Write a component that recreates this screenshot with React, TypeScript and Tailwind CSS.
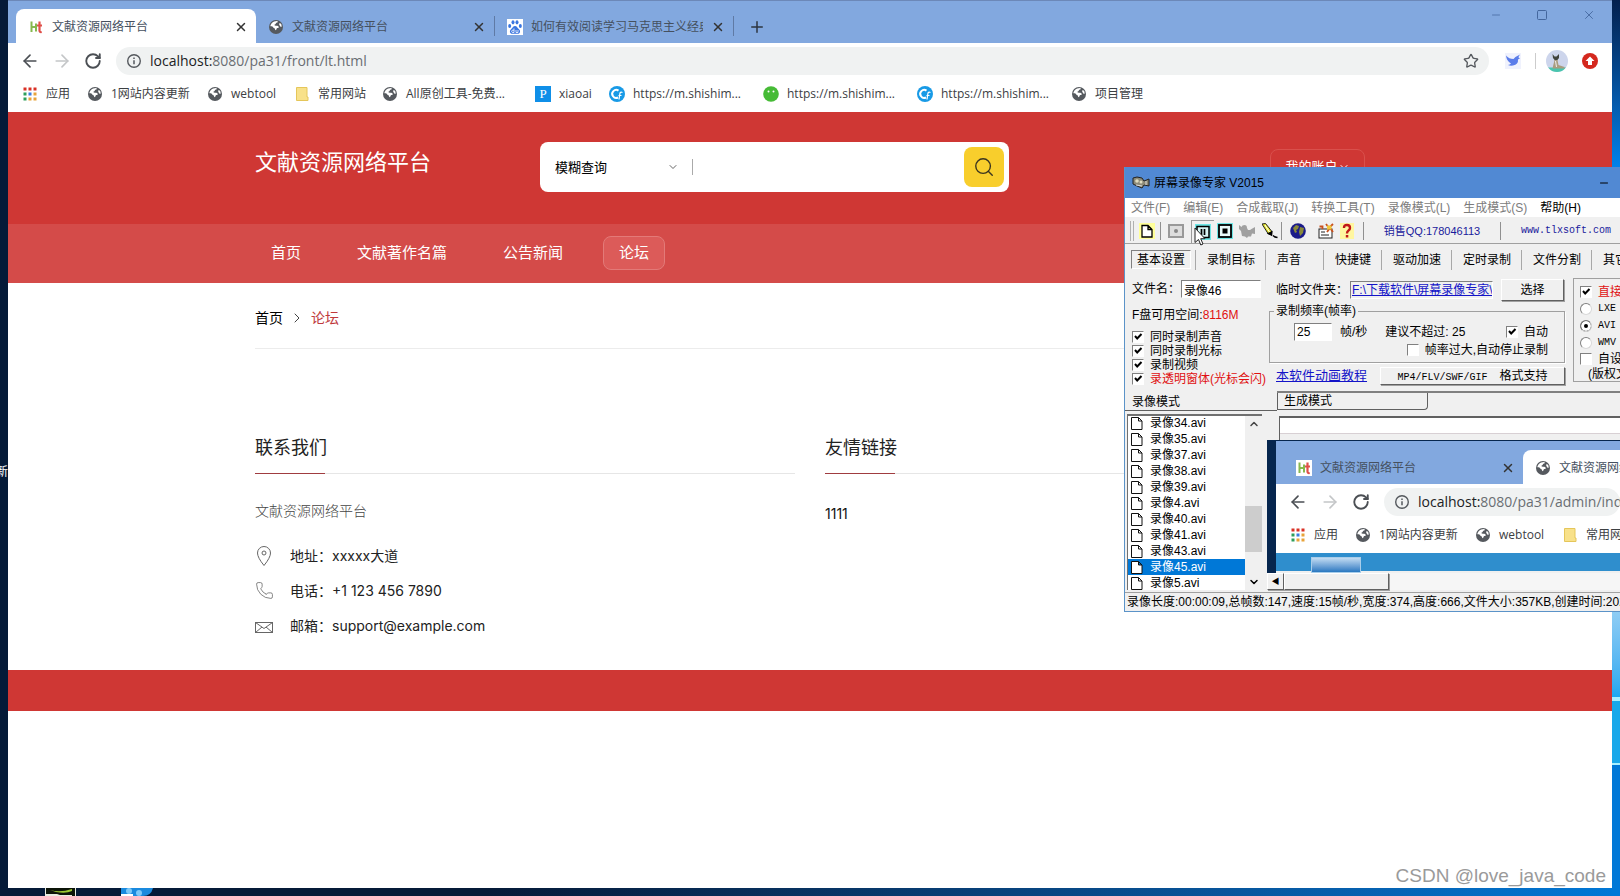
import React from "react";
import { ArrowLeft, ArrowRight, ChevronDown, ChevronRight, ChevronUp, Minus, Phone, Plus, RotateCw, Search, Square, Star, X } from "lucide-react";

const UI_FONT = "[font-family:'Open_Sans','Noto_Sans_CJK_SC',sans-serif]";
const SITE_FONT = "[font-family:Inter,'Noto_Sans_CJK_SC',sans-serif]";
const WIN_FONT = "[font-family:'Liberation_Sans','Noto_Sans_CJK_SC',sans-serif]";

/* ---------- small icons ---------- */

function GlobeIcon() {
    return (
        <svg viewBox="0 0 16 16" className="w-4 h-4 shrink-0">
            <circle cx="8" cy="8" r="7" fill="#55595e" />
            <path d="M9 1.9c1 .3 1 1.2.2 1.6-.8.3-1.400.3-1.400 1.100 0 .7-.8.6-1.200 1.200-.3.6.3 1 1.400.9 1.400-.1 2.600.3 2.800 1.200.1.700-.600.900-1.500 1-.8.2-.6 1.200-1.100 1.900-.5.8-1.200.2-1.200-.7 0-1-1.200-.9-1.700-1.700C4.900 7.600 3.800 7 2.400 7.200c.3-2.600 2.400-5.200 6.600-5.300z" fill="#fff" />
            <path d="M11.400 4.200c.8-.2 1.500.2 1.900 1.100.3.900.4 1.600.2 2.700-.9 0-1.600-.5-1.800-1.400-.2-.9-1-1.500-.3-2.400z" fill="#fff" />
        </svg>
    );
}

function HtIcon() {
    return (
        <svg viewBox="0 0 16 16" className="w-4 h-4 shrink-0">
            <rect width="16" height="16" fill="#fff" />
            <path d="M3.500 2.500v10.500M3.500 8h4.500M8 4.500v8" stroke="#86b84e" strokeWidth="2" fill="none" />
            <path d="M11.500 2.500v9q0 2 2.200 1.500M9 6.500h5" stroke="#e0504a" strokeWidth="2.200" fill="none" />
        </svg>
    );
}

function PawIcon() {
    return (
        <svg viewBox="0 0 16 16" className="w-4 h-4 shrink-0">
            <rect width="16" height="16" fill="#fff" />
            <g fill="#3a76e0">
                <ellipse cx="2.700" cy="7" rx="1.500" ry="2" />
                <ellipse cx="6" cy="3.300" rx="1.500" ry="2.100" />
                <ellipse cx="10" cy="3.300" rx="1.500" ry="2.100" />
                <ellipse cx="13.300" cy="7" rx="1.500" ry="2" />
                <path d="M8 7c2 0 2.500 2 4 3.200 2 1.800 1 4.600-1.300 4.600H5.300C3 14.800 2 12 4 10.200 5.500 9 6 7 8 7z" />
            </g>
            <path d="M7 9.500v4H5.800a1 1 0 010-2.300H7M9 11v2.500h2V11" stroke="#fff" strokeWidth=".8" fill="none" />
        </svg>
    );
}

function AppsIcon() {
    const colors = ["#d93025", "#d93025", "#d93025", "#2e9e5b", "#3b7de0", "#e8a33a", "#2e9e5b", "#e8a33a", "#e8a33a"];
    return (
        <svg viewBox="0 0 16 16" className="w-4 h-4 shrink-0">
            {colors.map((c, i) => (
                <rect key={i} x={1.5 + (i % 3) * 5} y={1.5 + Math.floor(i / 3) * 5} width="3" height="3" fill={c} />
            ))}
        </svg>
    );
}

function FolderIcon() {
    return (
        <svg viewBox="0 0 16 16" className="w-4 h-4 shrink-0">
            <path d="M2.500 1.500h10.500v9.500h1v3.500H2.500z" fill="#f8e18a" stroke="#e5c65a" />
        </svg>
    );
}

function PIcon() {
    return <span className="w-4 h-4 shrink-0 bg-[#0f8fe8] text-white text-[13px] leading-4 text-center [font-family:'Liberation_Serif',serif]">P</span>;
}

function CIcon() {
    return (
        <svg viewBox="0 0 16 16" className="w-4 h-4 shrink-0">
            <circle cx="8" cy="8" r="8" fill="#189ae6" />
            <path d="M9.500 4.600A4 4 0 109 11.500" stroke="#fff" strokeWidth="2" fill="none" />
            <path d="M13.500 6.500q-2.500-1-2.700 1.500L10 13.500M9.500 9.500h3" stroke="#fff" strokeWidth="1.200" fill="none" />
        </svg>
    );
}

function WechatIcon() {
    return (
        <svg viewBox="0 0 16 16" className="w-4 h-4 shrink-0">
            <circle cx="8" cy="8" r="7.800" fill="#46bb36" />
            <circle cx="5.500" cy="5.500" r="1" fill="#fff" />
            <circle cx="10.500" cy="5.500" r="1" fill="#fff" />
        </svg>
    );
}

function InfoIcon() {
    return (
        <svg viewBox="0 0 16 16" className="w-4 h-4 shrink-0" stroke="#55595e" fill="none">
            <circle cx="8" cy="8" r="6.300" strokeWidth="1.400" />
            <path d="M8 7.200v4M8 4.500v1.500" strokeWidth="1.500" />
        </svg>
    );
}

function FileIcon() {
    return (
        <svg viewBox="0 0 14 16" className="w-3.5 h-4 shrink-0">
            <path d="M1.500 2.500h7l3.500 3.500v8.500H1.500zM8.500 2.500v3.500h3.500" fill="#fff" stroke="#111" />
        </svg>
    );
}

function BirdIcon() {
    return (
        <svg viewBox="0 0 16 16" className="w-4 h-4 shrink-0 bg-[#f0f2fd]">
            <path d="M1 2.500q3 3.500 7.500 3.500Q10.500 3.500 15 1.500q-1.500 2-1.500 3l1.500.8-2 1.200q.5 5-5 6-3 .5-5-.5 2-.5 3-1.500Q1.500 8 1 2.500z" fill="#5b7dea" />
        </svg>
    );
}

function AvatarIcon() {
    return (
        <svg viewBox="0 0 22 22" className="w-[22px] h-[22px] shrink-0">
            <clipPath id="avatar"><circle cx="11" cy="11" r="11" /></clipPath>
            <g clipPath="url(#avatar)">
                <rect width="22" height="22" fill="#cdd5ec" />
                <rect y="17.500" width="22" height="5" fill="#49c5ae" />
                <path d="M6.500 4l2 2.500h2L13 4v4l-2 2.500H9L7 8z" fill="#40443e" />
                <path d="M8.500 10h3l1 5 6 2v1.500H6.500z" fill="#a99c80" />
                <path d="M9.500 11l1 6" stroke="#eee" />
            </g>
        </svg>
    );
}

function UpdateIcon() {
    return (
        <svg viewBox="0 0 16 16" className="w-4 h-4 shrink-0">
            <circle cx="8" cy="8" r="8" fill="#d4281e" />
            <path d="M8 3.500l4.500 4.500H10v4H6V8H3.500z" fill="#fff" />
        </svg>
    );
}

function PinIcon() {
    return (
        <svg viewBox="0 0 19 20" className="w-[19px] h-5" fill="none" stroke="#666">
            <path d="M9 19.500Q2.500 11.500 2.500 7a6.500 6.500 0 0113 0Q15.500 11.500 9 19.500z" />
            <circle cx="9" cy="7" r="2" />
        </svg>
    );
}

function PhoneIcon() {
    return <Phone className="w-[19px] h-[19px] text-[#666]" strokeWidth={1} />;
}

function MailIcon() {
    return (
        <svg viewBox="0 0 19 20" className="w-[19px] h-5" fill="none" stroke="#666">
            <rect x=".5" y="6.500" width="17" height="10" />
            <path d="M.5 6.500l8.500 6 8.500-6M.5 16.500l6.500-5.500M17.500 16.500L11 11" />
        </svg>
    );
}

/* ---------- browser chrome ---------- */

function Tab({ icon, title, active, width }: { icon: React.ReactNode; title: string; active?: boolean; width: string }) {
    return (
        <div className={`${width} ${active ? "bg-white rounded-t-lg" : ""} h-[34px] shrink-0 flex items-center pt-0.5 pl-3 pr-2`}>
            {icon}
            <span className="ml-2 flex-1 min-w-0 overflow-hidden whitespace-nowrap text-xs text-[#45505e]">{title}</span>
            <button aria-label="关闭标签页" className="ml-2 shrink-0">
                <X className="w-3.5 h-3.5 text-[#333]" strokeWidth={2.5} />
            </button>
        </div>
    );
}

function AddressBar({ path, children }: { path: string; children?: React.ReactNode }) {
    return (
        <div className="h-9 flex items-center pl-3 bg-white">
            <button aria-label="后退" className="w-8 shrink-0"><ArrowLeft className="w-5 h-5 text-[#4b4f54]" /></button>
            <button aria-label="前进" className="w-8 shrink-0"><ArrowRight className="w-5 h-5 text-[#c4c6c8]" /></button>
            <button aria-label="刷新" className="w-8 shrink-0"><RotateCw className="w-[18px] h-[18px] text-[#4b4f54]" strokeWidth={2.5} /></button>
            <div className="h-7 flex-1 flex items-center rounded-full bg-[#f0f2f2] px-2.5 overflow-hidden">
                <InfoIcon />
                <span className="ml-2 flex-1 whitespace-nowrap text-sm text-[#6a6e73]">
                    <span className="text-[#202124]">localhost:</span>{path}
                </span>
                {children && <Star className="w-4 h-4 text-[#55595e]" />}
            </div>
            {children}
        </div>
    );
}

const bookmarks = [
    { icon: <AppsIcon />, label: "应用", width: "w-[65px]" },
    { icon: <GlobeIcon />, label: "1网站内容更新", width: "w-[120px]" },
    { icon: <GlobeIcon />, label: "webtool", width: "w-[87px]" },
    { icon: <FolderIcon />, label: "常用网站", width: "w-[88px]" },
    { icon: <GlobeIcon />, label: "All原创工具-免费...", width: "w-[153px]" },
    { icon: <PIcon />, label: "xiaoai", width: "w-[74px]" },
    { icon: <CIcon />, label: "https://m.shishim...", width: "w-[154px]" },
    { icon: <WechatIcon />, label: "https://m.shishim...", width: "w-[154px]" },
    { icon: <CIcon />, label: "https://m.shishim...", width: "w-[154px]" },
    { icon: <GlobeIcon />, label: "项目管理", width: "w-[100px]" },
];

function BookmarkBar({ count }: { count?: number }) {
    return (
        <nav className="h-[33px] flex items-center pb-1 pl-3.5 bg-white overflow-hidden">
            {bookmarks.slice(0, count).map((b, i) => (
                <a key={i} href="#" className={`${b.width} shrink-0 flex items-center gap-2 whitespace-nowrap text-xs text-[#3c4043]`}>
                    {b.icon}
                    {b.label}
                </a>
            ))}
        </nav>
    );
}

/* ---------- site ---------- */

const navItems = ["首页", "文献著作名篇", "公告新闻", "论坛"];

function SiteHeader() {
    return (
        <header className="text-white">
            <div className="bg-[#cf3734] h-28">
                <div className="max-w-[1110px] mx-auto pt-[30px] flex items-start">
                    <h1 className="w-[285px] text-[22px] leading-10">文献资源网络平台</h1>
                    <form className="w-[469px] h-[50px] bg-white rounded-lg flex items-center pl-[15px] pr-[5px] text-black">
                        <label className="relative flex items-center">
                            <select aria-label="查询方式" className="appearance-none w-[138px] h-4 border-r border-[#aaa] text-[13px] leading-4 outline-none bg-white">
                                <option>模糊查询</option>
                            </select>
                            <ChevronDown className="absolute right-3.5 w-3 h-3 text-[#666]" />
                        </label>
                        <input aria-label="关键字" className="flex-1 min-w-0 h-10 px-3 outline-none" />
                        <button type="button" aria-label="搜索" className="w-10 h-10 rounded-lg bg-[#f8ce2c] flex items-center justify-center">
                            <Search className="w-[22px] h-[22px] text-[#3b3520]" strokeWidth={1.5} />
                        </button>
                    </form>
                    <button className="ml-auto mt-[7px] w-[95px] h-9 rounded-lg border border-[#d9504c] flex items-center justify-center text-[13px]">
                        我的账户 <ChevronDown className="w-3 h-3" />
                    </button>
                </div>
            </div>
            <div className="bg-[#d44b49] h-[59px]">
                <nav className="max-w-[1110px] h-full mx-auto flex items-center gap-6 pb-0.5">
                    {navItems.map((item) => (
                        <a
                            key={item}
                            href="#"
                            className={`px-[15px] h-[34px] leading-8 text-[15px] rounded-lg border ${item === "论坛" ? "bg-[#dc5b59] border-[#e37a78]" : "border-transparent"}`}
                        >
                            {item}
                        </a>
                    ))}
                </nav>
            </div>
        </header>
    );
}

const contacts = [
    { icon: <PinIcon />, text: "地址：xxxxx大道" },
    { icon: <PhoneIcon />, text: "电话：+1 123 456 7890" },
    { icon: <MailIcon />, text: "邮箱：support@example.com" },
];

function FooterHeading({ children }: { children: React.ReactNode }) {
    return (
        <h2 className="h-[42px] border-b border-[#e6e6e6] text-lg leading-8 text-[#222]">
            <span className="block w-[70px] h-[42px] whitespace-nowrap border-b border-[#a03c40]">{children}</span>
        </h2>
    );
}

function SiteBody() {
    return (
        <main>
            <div className="max-w-[1110px] mx-auto">
                <div className="h-[66px] pt-1 flex items-center gap-1.5 border-b border-[#ececec] text-sm">
                    <a href="#" className="text-black">首页</a>
                    <ChevronRight className="w-4 h-4 text-[#444]" strokeWidth={1.5} />
                    <span className="text-[#c0393c]">论坛</span>
                </div>
                <div className="mt-[83px] h-[238px] grid grid-cols-2 gap-[30px]">
                    <section>
                        <FooterHeading>联系我们</FooterHeading>
                        <p className="mt-[27px] text-sm leading-5 font-light text-[#444]">文献资源网络平台</p>
                        <ul className="mt-[17px] text-sm text-[#222]">
                            {contacts.map(({ icon, text }) => (
                                <li key={text} className="h-[35px] flex items-center gap-4">
                                    {icon}
                                    {text}
                                </li>
                            ))}
                        </ul>
                    </section>
                    <section>
                        <FooterHeading>友情链接</FooterHeading>
                        <a href="#" className="block mt-7 text-sm leading-6 text-[#111]">1111</a>
                    </section>
                </div>
            </div>
            <footer className="bg-[#cf3734] h-[41px]" />
        </main>
    );
}

/* ---------- recorder window ---------- */

const sunken = "border border-t-[#808080] border-l-[#808080] border-r-white border-b-white";
const raised = "border border-t-white border-l-white border-r-[#606060] border-b-[#606060] shadow-[1px_1px_0_#a0a0a0]";

function Check({ label, checked, red }: { label: string; checked?: boolean; red?: boolean }) {
    return (
        <label className={`flex items-center gap-1.5 whitespace-nowrap ${red ? "text-[#e01010]" : ""}`}>
            <span className="relative w-3 h-3 shrink-0">
                <input type="checkbox" defaultChecked={checked} className={`peer block appearance-none w-3 h-3 bg-white ${sunken}`} />
                <svg viewBox="0 0 12 12" className="hidden peer-checked:block absolute inset-0 pointer-events-none">
                    <path d="M3 5l2.200 2.500L9.500 3" stroke="#000" strokeWidth="2" fill="none" />
                </svg>
            </span>
            {label}
        </label>
    );
}

function Radio({ label, checked }: { label: string; checked?: boolean }) {
    return (
        <label className="h-[17px] flex items-center gap-1.5">
            <input type="radio" name="format" defaultChecked={checked} className="appearance-none w-3 h-3 shrink-0 rounded-full bg-white border border-t-[#808080] border-l-[#808080] border-r-[#d8d8d8] border-b-[#d8d8d8] checked:shadow-[inset_0_0_0_3px_#fff] checked:bg-black" />
            <span className="text-[10px] [font-family:'Liberation_Mono',monospace]">{label}</span>
        </label>
    );
}

function ToolButton({ label, width, children }: { label: string; width: string; children: React.ReactNode }) {
    return (
        <button aria-label={label} className={`${width} h-[22px] shrink-0 flex items-center justify-center`}>
            <svg viewBox="0 0 16 16" className="w-4 h-4">{children}</svg>
        </button>
    );
}

function Divider() {
    return <span className="w-px h-[18px] shrink-0 bg-[#909090]" />;
}

function Toolbar() {
    return (
        <div className="h-[27px] shrink-0 flex items-center pt-0.5 pl-[5px] border-b border-[#a0a0a0]">
            <span className="w-1 h-5 shrink-0 border-l border-r border-[#b0b0b0]" />
            <ToolButton label="新建" width="w-[26px]">
                <rect width="16" height="16" fill="#ffff9a" />
                <path d="M3 2.500h6l4 4v7.500H3zM9 2.500v4h4" fill="#fff" stroke="#000" strokeWidth="1.300" />
            </ToolButton>
            <Divider />
            <ToolButton label="录制" width="w-[30px]">
                <rect x="1" y="2" width="14" height="12" fill="#ddd" stroke="#999" strokeWidth="2" />
                <circle cx="8" cy="8" r="2" fill="#888" />
            </ToolButton>
            <span className="relative shrink-0 border-t border-l border-[#9a9a9a]">
                <ToolButton label="暂停" width="w-[22px]">
                    <rect width="16" height="16" fill="#6fe6e6" />
                    <rect x="2" y="2.500" width="12" height="11" fill="#d8f4f4" stroke="#000" strokeWidth="1.500" />
                    <path d="M6.500 5v6M9.500 5v6" stroke="#000" strokeWidth="1.700" />
                </ToolButton>
                <svg viewBox="0 0 12 20" className="absolute left-0.5 top-1.5 z-10 w-3 h-5 pointer-events-none">
                    <path d="M1 1v14.500l3.500-3 2.300 5.500 2.200-1-2.300-5.300H11z" fill="#fff" stroke="#222" />
                </svg>
            </span>
            <ToolButton label="停止" width="w-[21px]">
                <rect width="16" height="16" fill="#6fe6e6" />
                <rect x="2" y="2" width="12" height="12" fill="#e8fafa" stroke="#000" strokeWidth="1.800" />
                <rect x="5.500" y="5.500" width="5" height="5" fill="#000" />
            </ToolButton>
            <ToolButton label="截图" width="w-[23px]">
                <path d="M0 2l2.500 2Q3 2 5.500 2T8 5l1 2h2l1.500-1L16 4v7l-3-.5-1 3H9L8 15 6 13.500 3 13l-1-5L0 6z" fill="#a0a0a0" />
            </ToolButton>
            <ToolButton label="画笔" width="w-[23px]">
                <path d="M0 1l3.500-.5 6 7.500v4l-3.500-1.500z" fill="#e8e82a" stroke="#222" strokeWidth="1" />
                <path d="M3 2l4.500 7" stroke="#fff" />
                <path d="M6.500 10.500l3 1.500.3-3zM11 12.500l2 1.500 2.500.5" fill="#000" stroke="#000" strokeWidth="1.500" />
            </ToolButton>
            <Divider />
            <ToolButton label="主页" width="w-[32px]">
                <circle cx="8" cy="8" r="7.800" fill="#1c1c8a" />
                <path d="M3 5l3-3 3 1-1 3-2 1 1 2-2 1zM10 4l4 1-1 5-3 3-1-4z" fill="#8a8a3a" />
            </ToolButton>
            <ToolButton label="注册" width="w-[23px]">
                <rect x="1" y="6" width="13" height="9" fill="#fff" stroke="#222" />
                <path d="M3 9h4M3 12h8" stroke="#222" />
                <path d="M1.500 3.500h3V6M8 1l3 4 4-4M9 9l3-4 3 4" stroke="#c8501c" strokeWidth="1.800" fill="none" />
                <rect x="9" y="2.500" width="4.500" height="4" fill="#f0c83a" />
            </ToolButton>
            <ToolButton label="帮助" width="w-[20px]">
                <rect x="1" width="14" height="16" fill="#fff6a0" />
                <path d="M5 5q0-3 3-3t3 3q0 1.500-1.500 2.500T8 10.500" stroke="#c01818" strokeWidth="2.400" fill="none" />
                <rect x="6.800" y="12" width="2.500" height="2.500" fill="#c01818" />
            </ToolButton>
            <span className="w-1.5 shrink-0" />
            <Divider />
            <a href="#" className="w-[136px] shrink-0 text-center text-[11px] text-[#1a1a9c]">销售QQ:178046113</a>
            <Divider />
            <a href="#" className="ml-5 text-[10px] text-[#1a1a9c] [font-family:'Liberation_Mono',monospace]">www.tlxsoft.com</a>
        </div>
    );
}

const menus = ["文件(F)", "编辑(E)", "合成截取(J)", "转换工具(T)", "录像模式(L)", "生成模式(S)", "帮助(H)"];

const settingTabs = [
    { label: "录制目标", width: "w-[70px]" },
    { label: "声音", width: "w-[58px]" },
    { label: "快捷键", width: "w-[58px]" },
    { label: "驱动加速", width: "w-[70px]" },
    { label: "定时录制", width: "w-[70px]" },
    { label: "文件分割", width: "w-[70px]" },
    { label: "其它", width: "w-[70px]" },
];

function Settings() {
    return (
        <div className="h-[116px] shrink-0 flex items-start">
            <div className="w-[144px] shrink-0 pl-[7px]">
                <label className="h-6 flex items-center">
                    <span className="w-[49px] shrink-0">文件名：</span>
                    <input defaultValue="录像46" className={`w-20 h-[18px] pl-0.5 bg-white outline-none ${sunken}`} />
                </label>
                <p className="h-[29px] leading-7 whitespace-nowrap">F盘可用空间:<span className="text-[#e01010]">8116M</span></p>
                <div className="flex flex-col leading-[14px]">
                    <Check label="同时录制声音" checked />
                    <Check label="同时录制光标" checked />
                    <Check label="录制视频" checked />
                    <Check label="录透明窗体(光标会闪)" checked red />
                </div>
            </div>
            <div className="w-[296px] shrink-0">
                <div className="h-[26px] flex items-center pl-[7px]">
                    <span className="w-[74px] shrink-0">临时文件夹：</span>
                    <a href="#" className={`w-[143px] h-[18px] leading-4 pl-px shrink-0 overflow-hidden whitespace-nowrap underline text-[#1414c8] ${sunken}`}>F:\下载软件\屏幕录像专家\</a>
                    <button className={`ml-[8px] w-[63px] h-[22px] shrink-0 ${raised}`}>选择</button>
                </div>
                <fieldset className="h-[60px] border border-[#a0a0a0] shadow-[1px_1px_0_#fff] pt-1 pl-6 pr-4">
                    <legend className="-ml-5 px-0.5 leading-4">录制频率(帧率)</legend>
                    <div className="h-[18px] flex items-center">
                        <label className="flex items-center gap-2">
                            <input defaultValue="25" className={`w-[38px] h-[18px] pl-0.5 bg-white outline-none ${sunken}`} />
                            帧/秒
                        </label>
                        <span className="ml-[18px] flex-1">建议不超过: 25</span>
                        <Check label="自动" checked />
                    </div>
                    <div className="h-[18px] flex items-center justify-end">
                        <Check label="帧率过大,自动停止录制" />
                    </div>
                </fieldset>
                <div className="h-[25px] flex items-center justify-between pl-[7px]">
                    <a href="#" className="text-[13px] underline text-[#1414c8]">本软件动画教程</a>
                    <button className={`w-[185px] h-[18px] leading-4 ${raised}`}>
                        <span className="text-[10px] [font-family:'Liberation_Mono',monospace]">MP4/FLV/SWF/GIF</span>
                        <span className="ml-3">格式支持</span>
                    </button>
                </div>
            </div>
            <div className="ml-[8px] mt-px w-[160px] shrink-0 border border-[#a0a0a0] pl-1.5 pt-[5px]">
                <Check label="直接生成" checked red />
                <Radio label="LXE" />
                <Radio label="AVI" checked />
                <Radio label="WMV" />
                <Check label="自设信息" />
                <p className="pl-2 leading-[14px]">(版权文字)</p>
            </div>
        </div>
    );
}

const files = ["录像34.avi", "录像35.avi", "录像37.avi", "录像38.avi", "录像39.avi", "录像4.avi", "录像40.avi", "录像41.avi", "录像43.avi", "录像45.avi", "录像5.avi"];

function Preview() {
    return (
        <div className="flex-1 min-w-0 flex flex-col">
            <div className="h-6 shrink-0 ml-3 mt-0.5 border-t-2 border-l border-[#606060]">
                <div className="h-4 bg-white border-b border-[#d8d0d4]" />
            </div>
            <div className={`flex-1 min-h-0 overflow-hidden flex border-l-[9px] border-t border-[#06264e] ${UI_FONT}`}>
                <div className="flex-1 min-w-0">
                    <div className="h-[43px] bg-[#82a8df] flex items-end pl-2 overflow-hidden">
                        <Tab icon={<HtIcon />} title="文献资源网络平台" width="w-[239px]" />
                        <Tab icon={<GlobeIcon />} title="文献资源网络平台" width="w-[239px]" active />
                    </div>
                    <AddressBar path="8080/pa31/admin/index.html" />
                    <BookmarkBar count={4} />
                    <div className="h-[18px] bg-[#2f8ecd] pl-[35px] pt-1">
                        <div className="w-[50px] h-4 border border-[#a8cdea] bg-linear-to-b from-[#c3dcf2] to-[#2878c0]" />
                    </div>
                </div>
            </div>
            <div className="h-[17px] shrink-0 flex bg-[#f6f6f6]">
                <button aria-label="向左" className={`w-[17px] text-[8px] leading-3 bg-[#f0f0f0] ${raised}`}>◀</button>
                <div className={`w-[105px] bg-[#f0f0f0] ${raised}`} />
            </div>
        </div>
    );
}

function RecorderWindow() {
    return (
        <section className={`absolute top-[167px] left-[1124px] right-0 h-[445px] flex flex-col overflow-hidden bg-[#f0f0f0] border-l border-b border-[#5b93c8] text-xs text-black ${WIN_FONT}`}>
            <div className="h-[31px] shrink-0 flex items-center pl-[7px] pr-2.5 bg-[#5189d3]">
                <svg viewBox="0 0 18 14" className="w-[18px] h-3.5">
                    <path d="M1 2l4-1 5 1 2 3 5-2v7l-5-1-2 3-5-2-4-2z" fill="#8c8a78" stroke="#222" />
                    <circle cx="5" cy="5" r="1.800" fill="#e0dcc0" />
                    <circle cx="9" cy="6" r="1.500" fill="#e0dcc0" />
                    <path d="M4 9l6 1M14 5v4" stroke="#ddd" />
                </svg>
                <span className="ml-1 flex-1">屏幕录像专家 V2015</span>
                <button aria-label="最小化"><Minus className="w-3 h-3" strokeWidth={2} /></button>
            </div>
            <nav className="h-[19px] shrink-0 flex items-center gap-[13px] pl-1.5 bg-white">
                {menus.map((m) => (
                    <button key={m} className={`whitespace-nowrap ${m === "帮助(H)" ? "text-black" : "text-[#7c7c7c]"}`}>{m}</button>
                ))}
            </nav>
            <Toolbar />
            <div className="h-[33px] shrink-0 flex items-center pb-0.5 pl-1.5">
                <button className={`w-[60px] h-[19px] leading-4 mr-1 shrink-0 ${sunken}`}>基本设置</button>
                {settingTabs.map((t) => (
                    <button key={t.label} className={`${t.width} h-5 pl-[11px] shrink-0 border-l border-[#a8a8a8] text-left`}>{t.label}</button>
                ))}
            </div>
            <Settings />
            <div className="h-[18px] shrink-0 flex items-end">
                <button className="w-[152px] h-[18px] pl-[7px] shrink-0 text-left border-b border-[#606060]">录像模式</button>
                <div className="flex-1 h-5 border-t-2 border-[#808080]">
                    <button className="block w-[151px] h-[17px] leading-4 pl-1.5 text-left border-l border-r border-b border-[#606060] rounded-br">生成模式</button>
                </div>
            </div>
            <div className="flex-1 min-h-0 flex pt-[3px] pb-0.5">
                <div className="w-[135px] ml-0.5 mr-[5px] shrink-0 flex bg-white border-t-2 border-l border-[#707070] overflow-hidden">
                    <ul className="flex-1 -mt-px">
                        {files.map((f) => (
                            <li key={f} className={`h-4 leading-4 flex items-center gap-1.5 pl-0.5 ${f === "录像45.avi" ? "bg-[#0078d7] text-white" : ""}`}>
                                <FileIcon />
                                {f}
                            </li>
                        ))}
                    </ul>
                    <div className="w-[17px] flex flex-col items-center justify-between bg-[#f0f0f0]">
                        <ChevronUp className="w-3 h-4 text-[#444]" strokeWidth={3} />
                        <div className="w-full h-[46px] mt-[52px] bg-[#cdcdcd]" />
                        <ChevronDown className="w-3 h-4" strokeWidth={3} />
                    </div>
                </div>
                <Preview />
            </div>
            <div className="h-[19px] shrink-0 leading-[19px] pl-0.5 border-t border-[#a0a0a0] whitespace-nowrap">
                录像长度:00:00:09,总帧数:147,速度:15帧/秒,宽度:374,高度:666,文件大小:357KB,创建时间:2021
            </div>
        </section>
    );
}

/* ---------- desktop ---------- */

export default function App() {
    return (
        <div className={`relative min-h-screen flex flex-col overflow-hidden px-2 pb-2 bg-linear-to-r from-[#051a38] from-30% to-[#0078d7] ${UI_FONT}`}>
            <div className="absolute right-0 top-0 w-2 h-full flex flex-col">
                <div className="h-[170px] bg-linear-to-b from-[#03204e] to-[#0084ee]" />
                <div className="h-[441px] bg-[#0a84e6]" />
                <div className="h-[90px] bg-linear-to-b from-[#8fcdf4] to-[#18a8f0] border-b-4 border-[#a8f0ff]" />
                <div className="h-[64px] bg-[#18a8ea] border-b-2 border-[#a8f0ff]" />
                <div className="flex-1 bg-[#0078d7]" />
            </div>
            <span className="absolute -left-1 top-[464px] text-xs leading-4 text-white">新</span>
            <svg viewBox="0 0 110 8" className="absolute left-[45px] bottom-0 w-[110px] h-2">
                <path d="M0 0h31v8H0z" fill="#0c1408" />
                <path d="M5 2q10 3 22-1v2q-6 3-16 1z" fill="#9bc832" />
                <path d="M0 6h12l3 1h12v1H0zM30 0h1v8h-1zM0 0h1v8H0z" fill="#e8ece0" />
                <path d="M76 0h32q-2 8-10 8H76z" fill="#1a8ade" />
                <circle cx="84" cy="3" r="3" fill="#7cc8f8" />
                <circle cx="94" cy="5" r="3" fill="#7cc8f8" />
                <path d="M76 6h12v2H76z" fill="#fff" />
            </svg>

            <div className="relative flex-1 flex flex-col bg-white">
                <div className="h-[43px] bg-[#82a8df] border-t border-[#6c88b8] flex items-end pl-2">
                    <Tab icon={<HtIcon />} title="文献资源网络平台" width="w-[240px]" active />
                    <Tab icon={<GlobeIcon />} title="文献资源网络平台" width="w-[238px]" />
                    <span className="w-px h-5 mb-[7px] bg-[#5f7aa5]" />
                    <Tab icon={<PawIcon />} title="如何有效阅读学习马克思主义经典著作" width="w-[238px]" />
                    <span className="w-px h-5 mb-[7px] bg-[#5f7aa5]" />
                    <button aria-label="新标签页" className="mb-[7px] ml-3.5"><Plus className="w-[18px] h-[18px] text-[#2c3540]" /></button>
                    <div className="ml-auto mb-[21px] mr-4 flex items-center gap-[34px] text-[#44679e]">
                        <button aria-label="最小化"><Minus className="w-3 h-3" strokeWidth={1.5} /></button>
                        <button aria-label="最大化"><Square className="w-3 h-3" strokeWidth={2} /></button>
                        <button aria-label="关闭"><X className="w-3.5 h-3.5" strokeWidth={1.5} /></button>
                    </div>
                </div>
                <AddressBar path="8080/pa31/front/lt.html">
                    <div className="flex items-center pl-4 pr-3.5">
                        <BirdIcon />
                        <span className="ml-3.5 mr-2.5 w-px h-4 bg-[#ccc]" />
                        <AvatarIcon />
                        <span className="w-3.5" />
                        <UpdateIcon />
                    </div>
                </AddressBar>
                <BookmarkBar />
                <div className={SITE_FONT}>
                    <SiteHeader />
                    <SiteBody />
                </div>
                <p className="mt-auto self-end pr-1.5 text-[19px] leading-6 text-[#9a9a9a] [font-family:'Liberation_Sans',sans-serif]">CSDN @love_java_code</p>
            </div>
            <RecorderWindow />
        </div>
    );
}
